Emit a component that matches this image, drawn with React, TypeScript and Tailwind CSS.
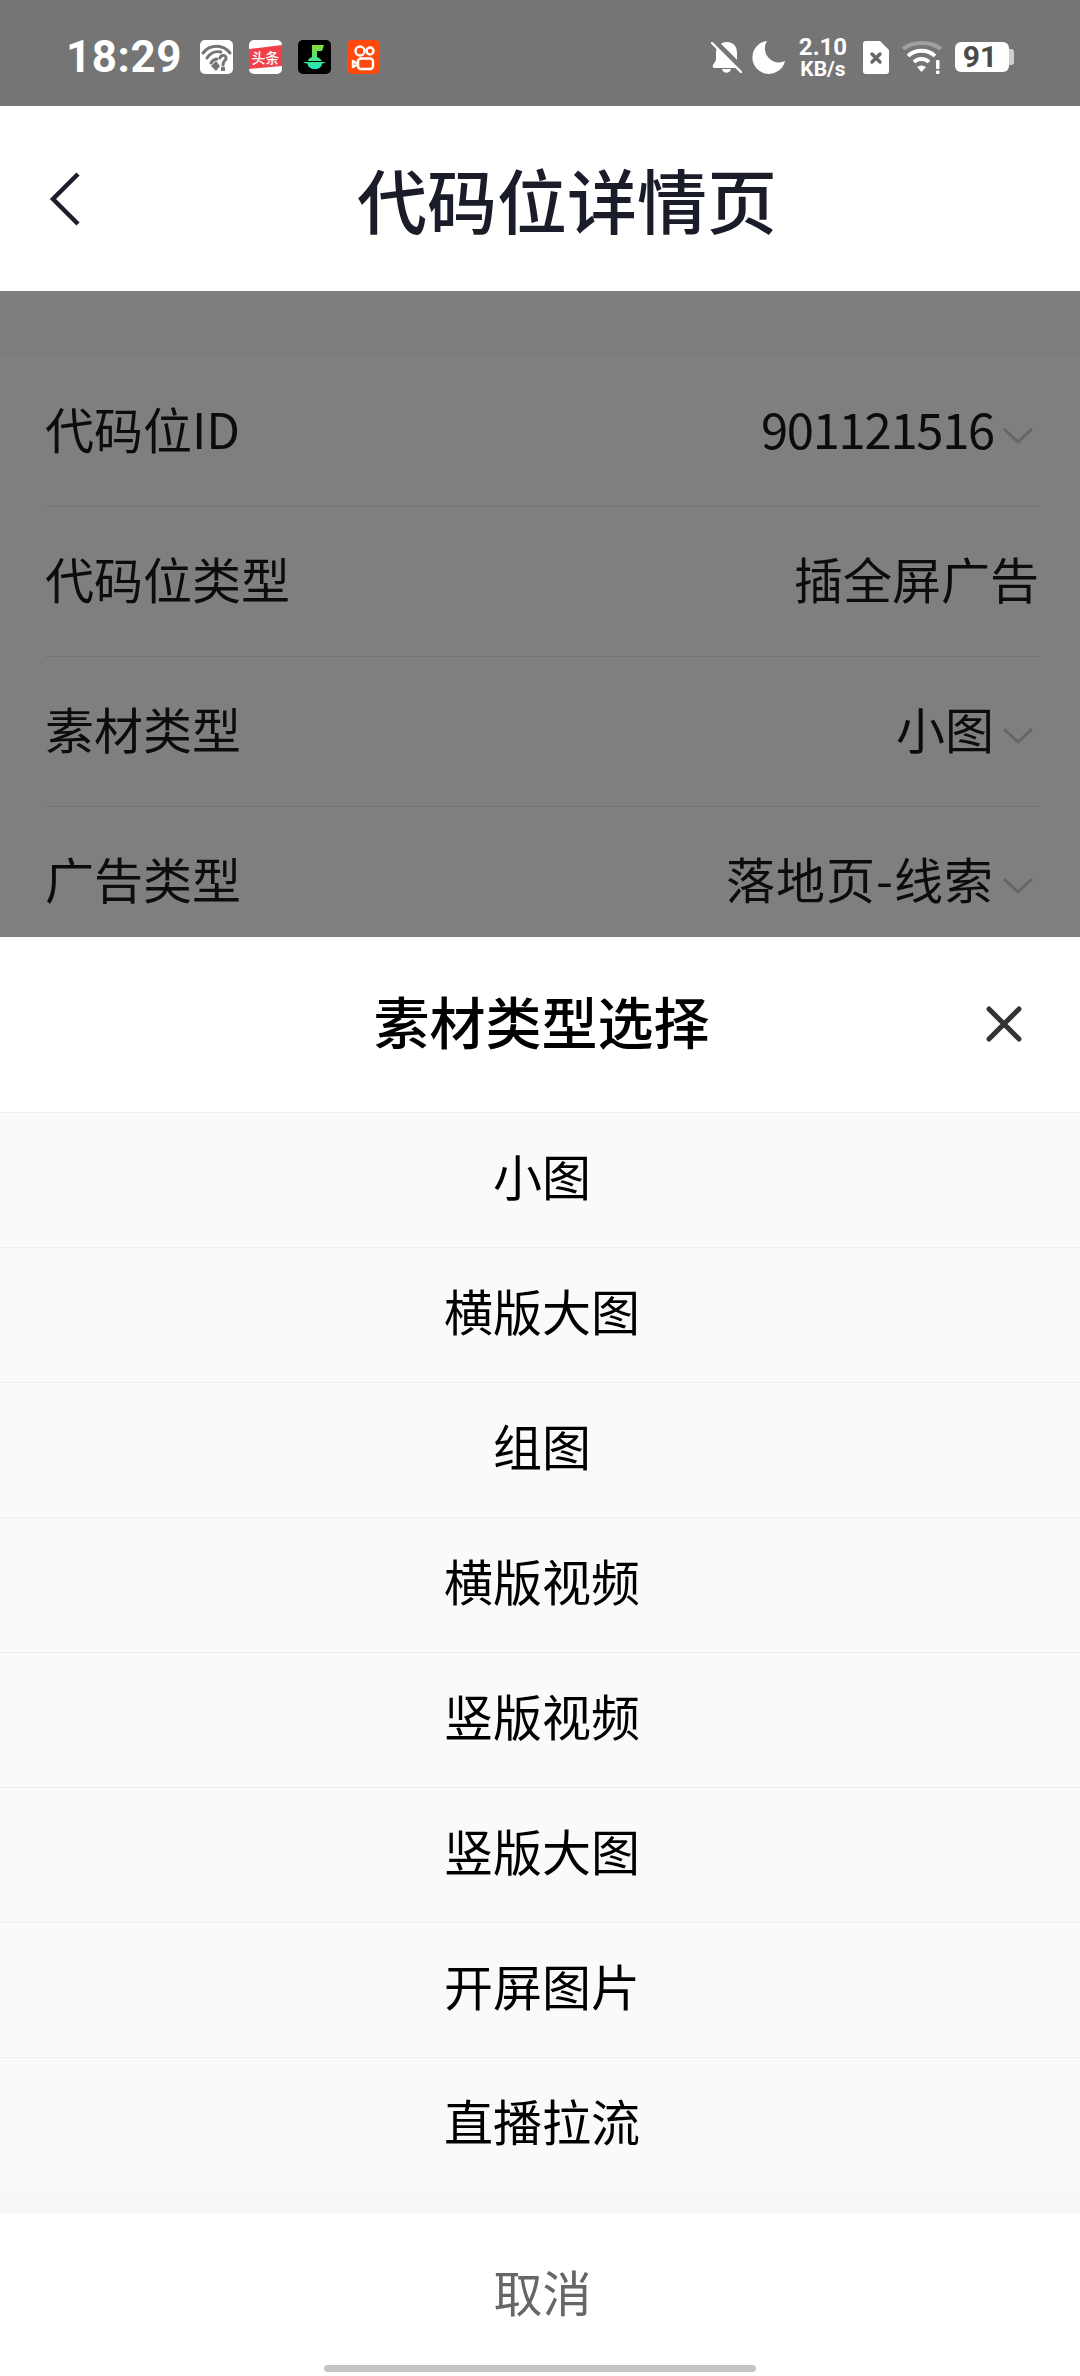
import React from "react";

const FONT = "font-['Noto_Sans_CJK_SC','Noto_Sans',sans-serif]";

function WifiQ() {
  return (
    <svg width="33" height="34" viewBox="0 0 33 34" className="block">
      <rect width="33" height="34" rx="5" fill="#fff" />
      <g fill="none" stroke="#757575" strokeWidth="3" strokeLinecap="round">
        <path d="M3 13 C10 4 23 4 30 13" />
        <path d="M7 18 C11 12 17 11 21 12" />
        <path d="M11 23 C13 20 15 19 17 19" />
        <path d="M20 18 C21 14 27 15 26 19 C25 21 23 21 23 25" />
      </g>
      <path d="M11 26 L16 21 L20 26 L16 31 Z" fill="#757575" />
      <rect x="21" y="27" width="4" height="4" fill="#757575" />
    </svg>
  );
}

function Toutiao() {
  return (
    <div className="relative h-[34px] w-[33px] overflow-hidden rounded-[5px] bg-white">
      <svg width="33" height="34" viewBox="0 0 33 34" className="absolute left-0 top-0">
        <path d="M0 9 L33 5 L33 26 L0 29 Z" fill="#f2404a" />
      </svg>
      <div className="absolute inset-0 flex items-center justify-center whitespace-nowrap text-[14px] font-medium leading-none text-white font-['Noto_Sans_CJK_SC',sans-serif]">
        头条
      </div>
    </div>
  );
}

function Music() {
  return (
    <svg width="33" height="34" viewBox="0 0 33 34" className="block">
      <defs>
        <linearGradient id="mg" x1="0" y1="0" x2="0" y2="1">
          <stop offset="0" stopColor="#8adc34" />
          <stop offset="1" stopColor="#1fe8c0" />
        </linearGradient>
      </defs>
      <rect width="33" height="34" rx="5" fill="#000" />
      <path d="M14 5 H26 L24 11 H19 V17 C22 18 24 20 24 23 C24 27 21 29 17 29 C13 29 9.500 27 9.500 23 C9.500 20 11 18 14 17 Z" fill="url(#mg)" />
      <rect x="5" y="21" width="23" height="1" fill="#000" />
      <path d="M5 22 H28 L25 23.500 H8 Z" fill="#38e59a" />
    </svg>
  );
}

function Kuaishou() {
  return (
    <svg width="33" height="34" viewBox="0 0 33 34" className="block">
      <rect width="33" height="34" rx="5" fill="#fe4a0c" />
      <g fill="none" stroke="#fff" strokeWidth="2.400">
        <circle cx="13" cy="11" r="4.500" />
        <circle cx="23" cy="11" r="3.500" />
        <rect x="11" y="18.500" width="15" height="10.500" rx="3" />
        <path d="M11 24 L6 21 V27 Z" strokeLinejoin="round" />
      </g>
    </svg>
  );
}

function BellOff() {
  return (
    <svg width="31" height="31" viewBox="0 0 31 31" className="block">
      <path d="M16 0 C23 0 26 5 26 11 V18 L29 23 C30 25 29 26 27 26 H4 C2 26 1 25 2 23 L5 18 V11 C5 5 9 0 16 0 Z" fill="#fff" />
      <path d="M11 27 H20 C19 32 12 32 11 27 Z" fill="#fff" />
      <path d="M2 -2 L33 29" stroke="#757575" strokeWidth="6" />
      <path d="M1 1 L30 30" stroke="#fff" strokeWidth="2.400" strokeLinecap="round" />
    </svg>
  );
}

function Moon() {
  return (
    <svg width="33" height="33" viewBox="0 0 33 33" className="block">
      <path d="M15 0 A16.500 16.500 0 1 0 33 20 A14 14 0 0 1 15 0 Z" fill="#fff" />
    </svg>
  );
}

function Sim() {
  return (
    <svg width="26" height="33" viewBox="0 0 26 33" className="block">
      <path d="M3 0 H17 L26 9 V30 C26 32 25 33 23 33 H3 C1 33 0 32 0 30 V3 C0 1 1 0 3 0 Z" fill="#fff" />
      <path d="M9 13 L17 21 M17 13 L9 21" stroke="#666" strokeWidth="3.400" strokeLinecap="round" />
    </svg>
  );
}

function Wifi() {
  return (
    <svg width="40" height="33" viewBox="0 0 40 33" className="block">
      <g fill="none" strokeWidth="3.800">
        <path d="M1 8 C11 0 29 0 39 8" stroke="#a0a0a0" />
        <path d="M6 15 C13 8 26 8 33 15" stroke="#fff" />
        <path d="M12 21 C16 17 23 17 27 21" stroke="#fff" />
      </g>
      <path d="M15 26 C18 24 21 24 24 26 L19.500 31 Z" fill="#fff" />
      <rect x="34" y="19" width="3.500" height="9" rx="1" fill="#fff" />
      <rect x="34" y="29.500" width="3.500" height="3.500" rx="1" fill="#fff" />
    </svg>
  );
}

function Battery() {
  return (
    <div className="flex items-center">
      <div className="flex h-[30px] w-[54px] items-center justify-center rounded-[6px] bg-white pr-[4px] text-[30px] font-bold leading-none text-[#4a4a4a] font-['Roboto',sans-serif]">
        91
      </div>
      <div className="h-[16px] w-[5px] rounded-r-[3px] bg-[#cfcfcf]" />
    </div>
  );
}

function StatusBar() {
  return (
    <div className="flex h-[106px] shrink-0 items-center justify-between bg-[#757575] pl-[66px] pr-[66px] pt-[8px]">
      <div className="flex items-center">
        <span className="mr-[18px] text-[44px] font-bold leading-none tracking-[0.5px] text-white font-['Roboto',sans-serif]">18:29</span>
        <div className="flex items-center gap-[16px]">
          <WifiQ />
          <Toutiao />
          <Music />
          <Kuaishou />
        </div>
      </div>
      <div className="flex items-center">
        <BellOff />
        <div className="ml-[10px]"><Moon /></div>
        <div className="ml-[12px] flex w-[52px] flex-col items-center font-bold text-white font-['Roboto',sans-serif]">
          <span className="text-[24px] leading-[23px]">2.10</span>
          <span className="text-[21px] leading-[20px]">KB/s</span>
        </div>
        <div className="ml-[14px]"><Sim /></div>
        <div className="ml-[13px]"><Wifi /></div>
        <div className="ml-[13px]"><Battery /></div>
      </div>
    </div>
  );
}

function Header() {
  return (
    <div className="relative flex h-[185px] shrink-0 items-center justify-center bg-white pl-[54px]">
      <svg width="32" height="56" viewBox="0 0 32 56" className="absolute left-[49px] top-[65px]">
        <path d="M29 3 L4 28 L29 53" fill="none" stroke="#1c1f2b" strokeWidth="4.500" strokeLinejoin="miter" />
      </svg>
      <h1 className="text-[70px] font-medium leading-none text-[#1a1d29]">代码位详情页</h1>
    </div>
  );
}

function Chevron() {
  return (
    <svg width="32" height="20" viewBox="0 0 32 20" className="ml-[8px] mt-[8px] shrink-0">
      <path d="M2 3 L16 16 L30 3" fill="none" stroke="#666" strokeWidth="3" />
    </svg>
  );
}

function Row({
  label,
  value,
  chevron,
  border,
  valueClass,
}: {
  label: string;
  value: string;
  chevron?: boolean;
  border?: boolean;
  valueClass?: string;
}) {
  return (
    <div className={`flex h-[150px] shrink-0 items-center justify-between ${border ? "border-b border-[#737373]" : ""}`}>
      <span className="pb-[9px] text-[49px] leading-none text-[#0c0c0c]">{label}</span>
      <div className={`flex items-center ${chevron ? "pr-[5px]" : "pr-0"}`}>
        <span className={`pb-[9px] text-[49px] leading-none text-[#0c0c0c] ${valueClass ?? ""}`}>{value}</span>
        {chevron && <Chevron />}
      </div>
    </div>
  );
}

function Option({ text }: { text: string }) {
  return (
    <div className="flex h-[135px] items-center justify-center border-t border-[#efefef] bg-[#fafafa] pb-[12px] pl-[4px] text-[49px] leading-none text-black">
      {text}
    </div>
  );
}

export default function App() {
  const options = ["小图", "横版大图", "组图", "横版视频", "竖版视频", "竖版大图", "开屏图片", "直播拉流"];
  return (
    <div className={`flex h-[2376px] w-[1080px] flex-col overflow-hidden bg-white ${FONT}`}>
      <StatusBar />
      <Header />
      <div className="h-[646px] shrink-0 overflow-hidden bg-[#7d7d7d]">
        <div className="mt-[66px] bg-[#7f7f7f] pb-[100px] pl-[45px] pr-[41px]">
          <Row label="代码位ID" value="901121516" chevron border valueClass="tracking-[-1.3px]" />
          <Row label="代码位类型" value="插全屏广告" border />
          <Row label="素材类型" value="小图" chevron border />
          <Row label="广告类型" value="落地页-线索" chevron valueClass="tracking-[1px]" />
        </div>
      </div>
      <div className="relative flex h-[175px] shrink-0 items-center justify-center bg-white pb-[9px] pl-[3px]">
        <h2 className="text-[56px] font-medium leading-none text-black">素材类型选择</h2>
        <svg width="36" height="36" viewBox="0 0 36 36" className="absolute left-[986px] top-[69px]">
          <path d="M3 3 L33 33 M33 3 L3 33" stroke="#333" strokeWidth="5" strokeLinecap="round" />
        </svg>
      </div>
      <div className="flex shrink-0 flex-col">
        {options.map((o) => (
          <Option key={o} text={o} />
        ))}
      </div>
      <div className="h-[22px] shrink-0 bg-[#f7f7f7]" />
      <div className="relative flex flex-1 flex-col items-center bg-white pl-[5px]">
        <div className="mt-[52px] text-[49px] leading-none text-[#666]">取消</div>
        <div className="absolute left-[324px] top-[151px] h-[7px] w-[432px] rounded-full bg-[#c4c4c4]" />
      </div>
    </div>
  );
}
